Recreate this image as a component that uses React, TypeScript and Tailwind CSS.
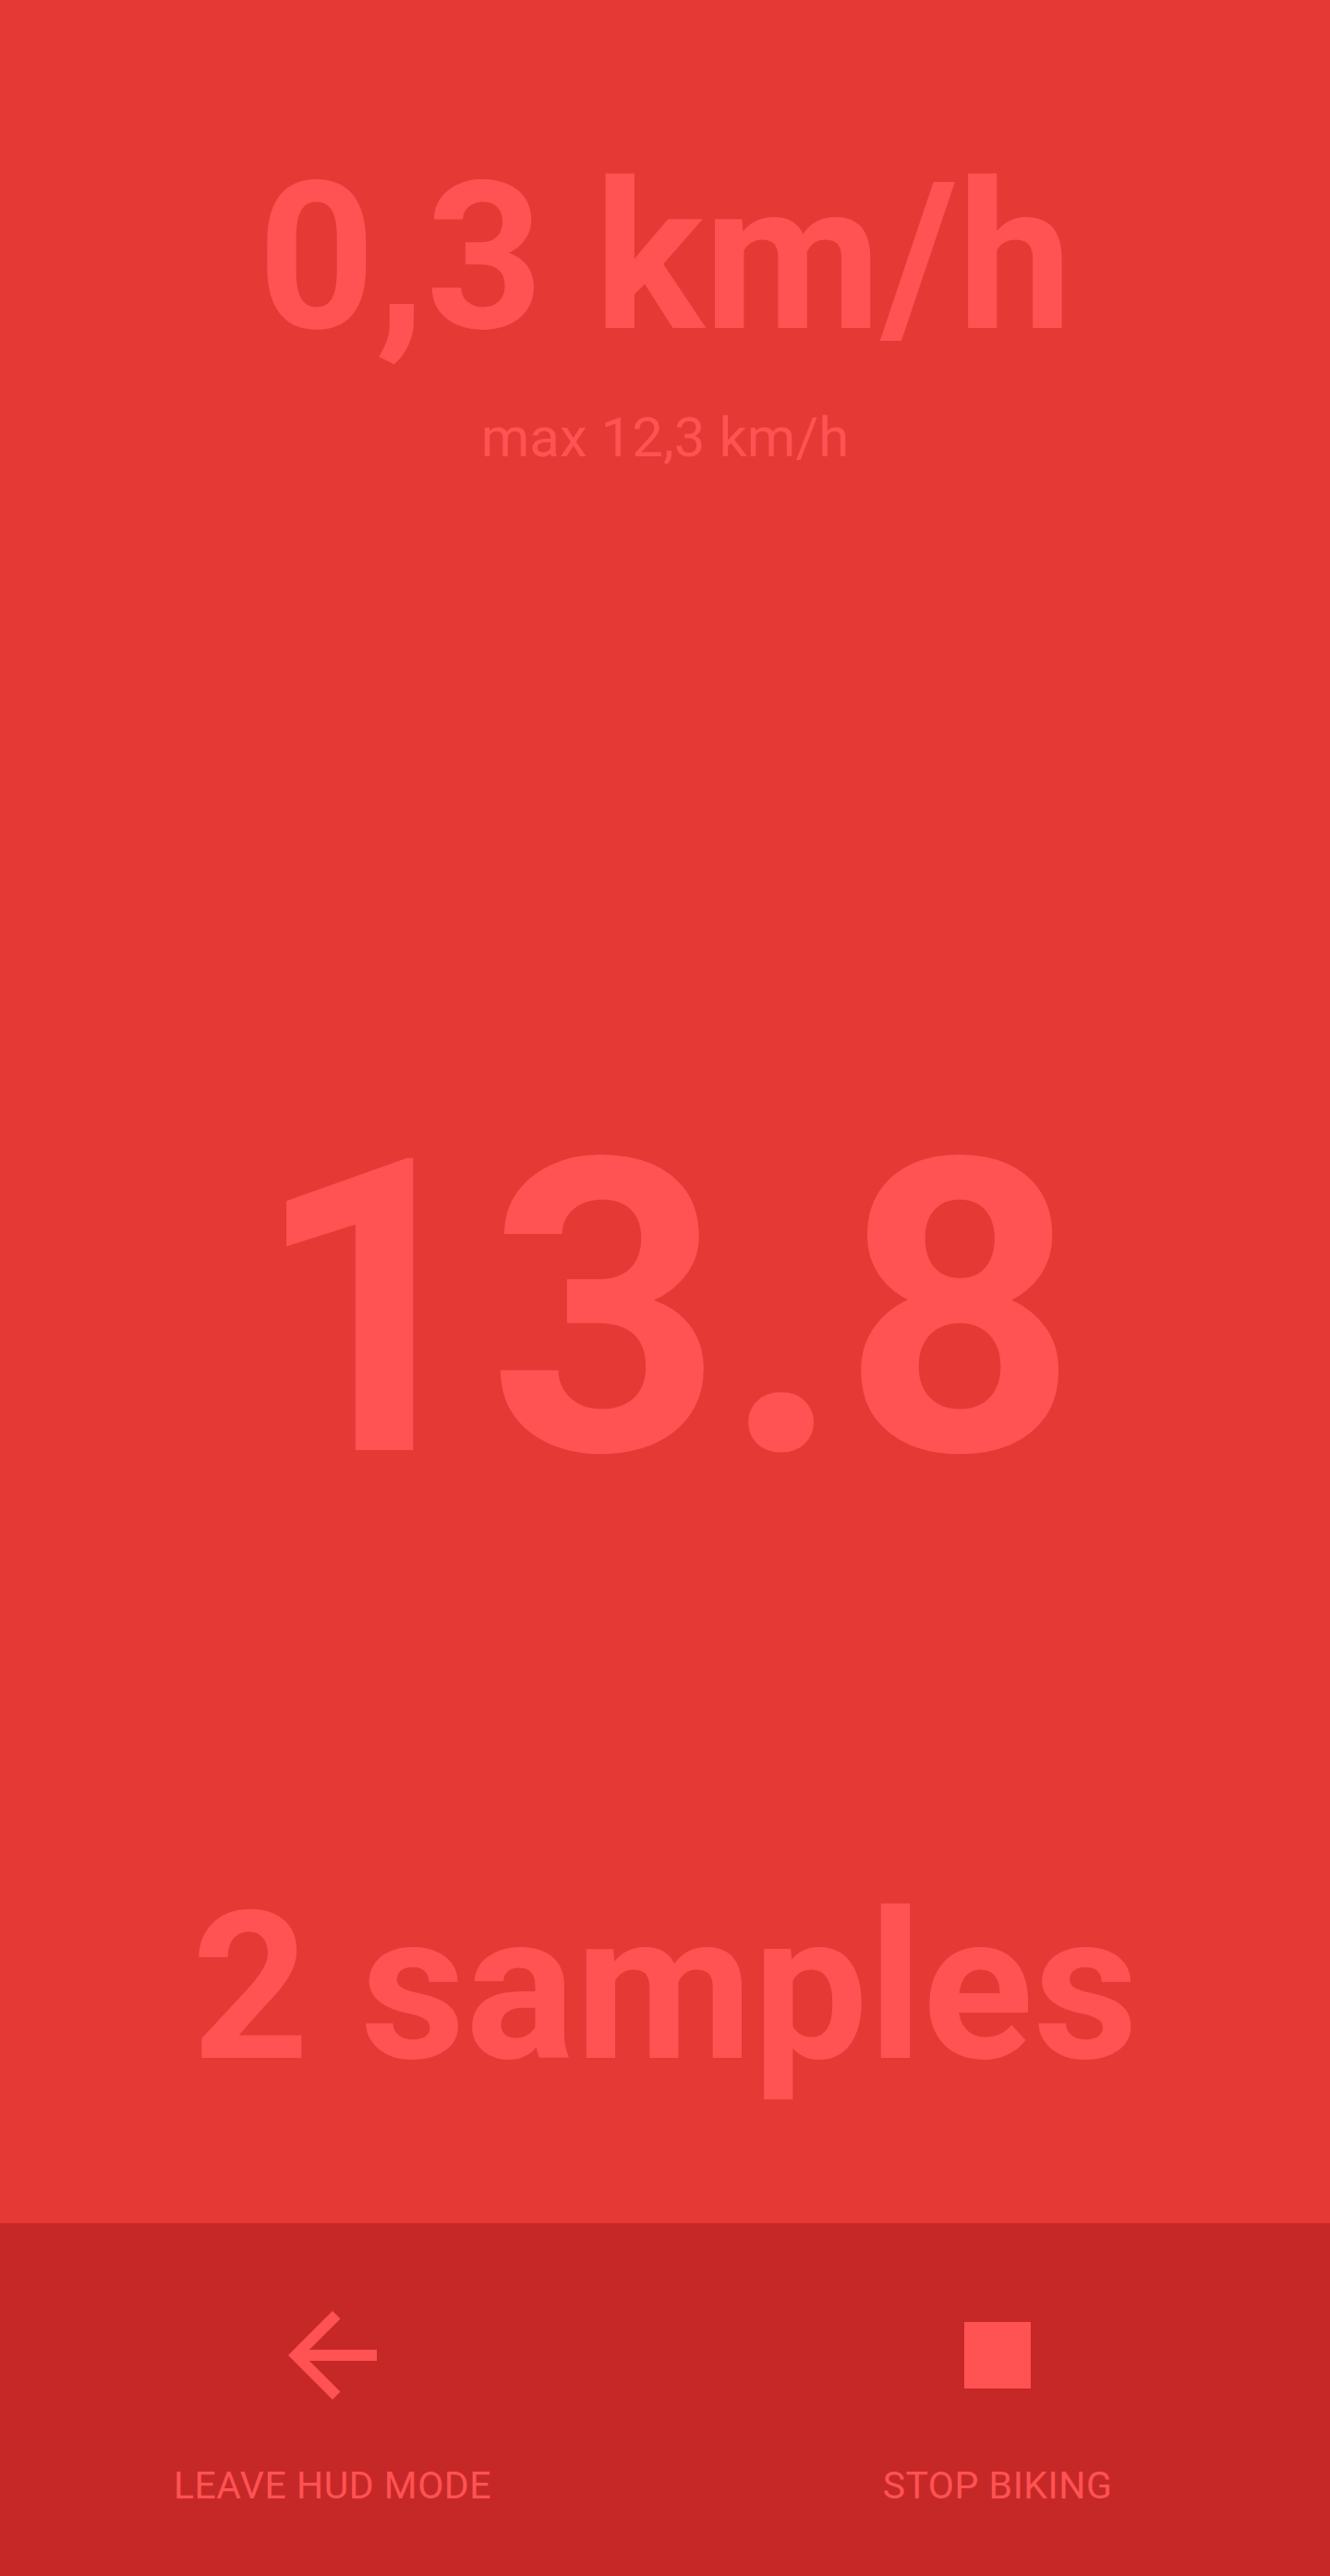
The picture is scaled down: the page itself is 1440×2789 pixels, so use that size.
import React from "react";

export default function App() {
  const font = { fontFamily: "Roboto, 'Noto Sans', sans-serif" };
  return (
    <div className="flex h-[2789px] w-[1440px] flex-col bg-[#e53935] text-[#ff5252]" style={font}>
      <div className="flex flex-1 flex-col items-center">
        <div className="mt-[168px] text-[222px] font-bold leading-none">0,3 km/h</div>
        <div className="mt-[54px] text-[60px] font-normal leading-none">max 12,3 km/h</div>
        <div className="mt-[692px] text-[444px] font-bold leading-none">13.8</div>
        <div className="mt-[401px] text-[222px] font-bold leading-none">2 samples</div>
      </div>
      <div className="grid h-[382px] grid-cols-2 bg-[#c62828]">
        <div className="flex flex-col items-center pt-[71px]">
          <svg viewBox="0 0 24 24" className="h-[144px] w-[144px]" fill="#ff5252">
            <path d="M20 11H7.83l5.59-5.59L12 4l-8 8 8 8 1.41-1.41L7.83 13H20v-2z" />
          </svg>
          <div className="mt-[49px] text-[41px] leading-none tracking-[0.5px]">LEAVE HUD MODE</div>
        </div>
        <div className="flex flex-col items-center pt-[71px]">
          <svg viewBox="0 0 24 24" className="h-[144px] w-[144px]" fill="#ff5252">
            <path d="M6 6h12v12H6z" />
          </svg>
          <div className="mt-[49px] text-[41px] leading-none tracking-[0.5px]">STOP BIKING</div>
        </div>
      </div>
    </div>
  );
}
